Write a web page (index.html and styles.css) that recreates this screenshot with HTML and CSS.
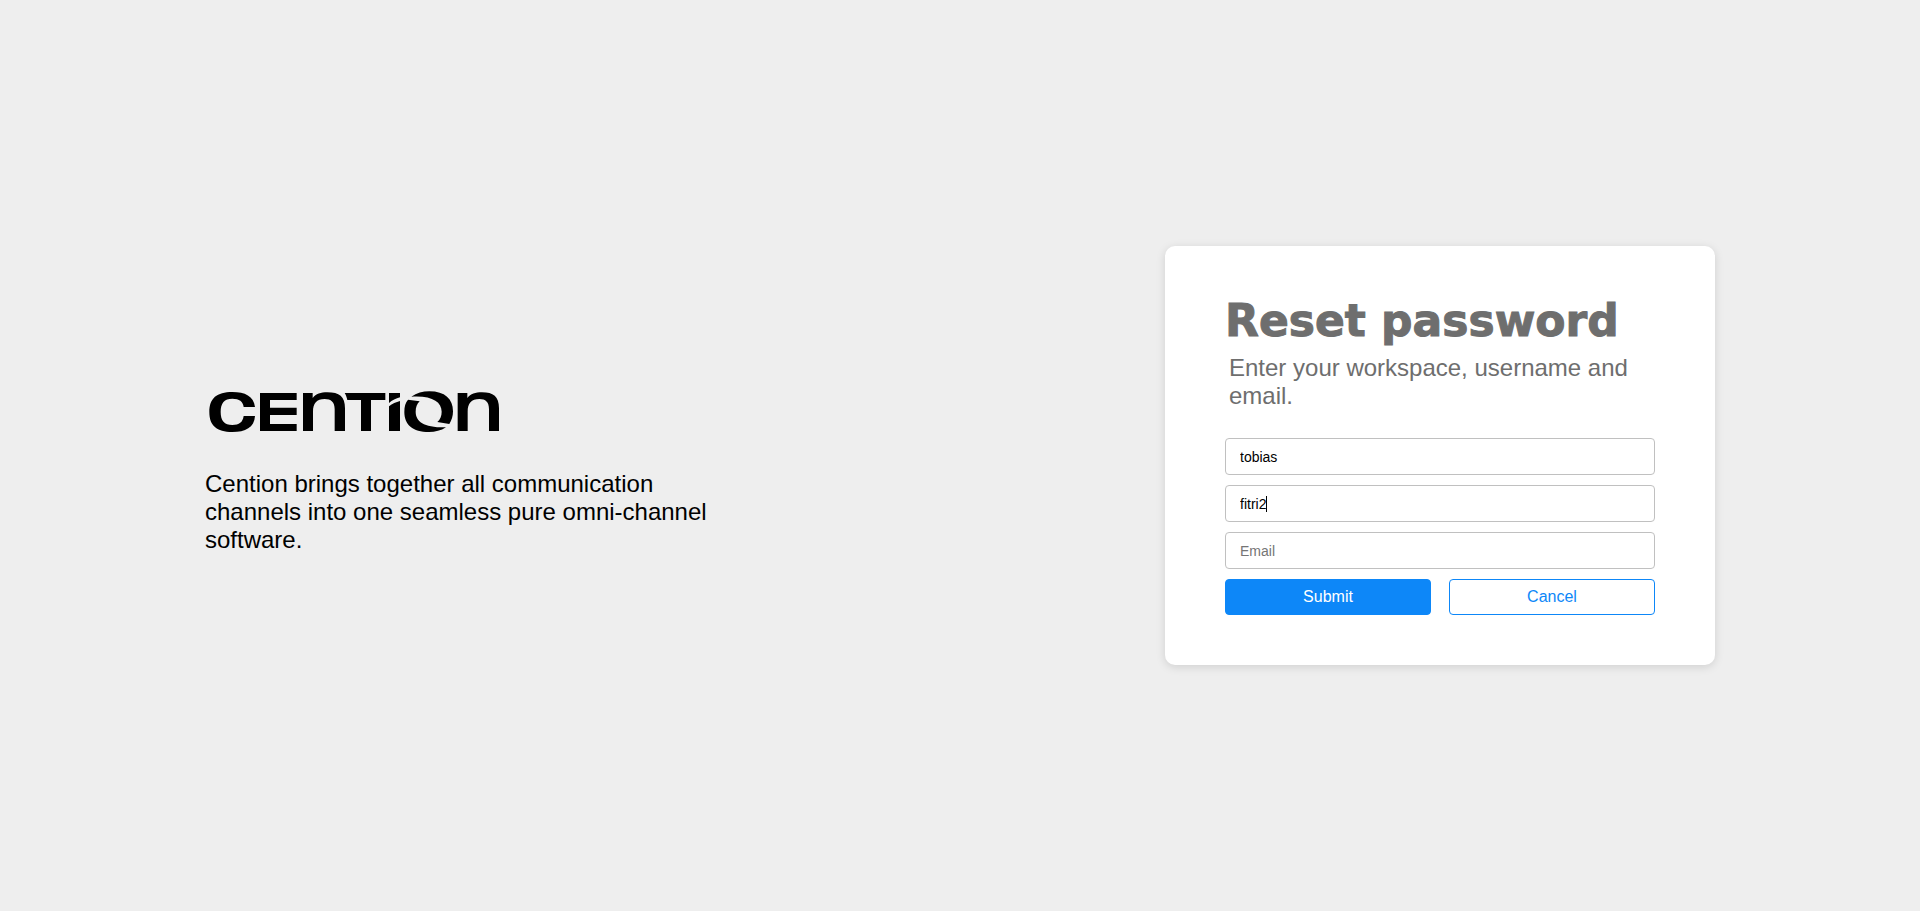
FILE: index.html
```html
<!DOCTYPE html>
<html lang="en">
<head>
<meta charset="utf-8">
<meta name="viewport" content="width=device-width, initial-scale=1">
<title>Cention - Reset password</title>
<link rel="stylesheet" href="styles.css">
</head>
<body>
<main class="page">
  <section class="intro">
    <svg class="logo" viewBox="15 30 900 129" role="img" aria-label="Cention">
      <path d="M165 81C161 48 135 36 97 36C50 36 28 55 28 96C28 137 50 156 97 156C136 156 163 143 165 108H131C128 127 118 135 97 135C73 135 62 122 62 96C62 69 73 56 97 56C118 56 129 64 131 81Z"/>
      <path d="M180 39H290V60H210V83H290V105H210V132H290V153H180Z"/>
      <path d="M309 39H338V54C348 42 362 37 382 37C418 37 435 50 435 85V153H404V88C404 66 393 57 374 57C350 57 339 70 339 95V153H309Z"/>
      <path d="M434 39H556V60H513V153H483V60H442C440 52 438 45 434 39Z"/>
      <path d="M567 39H600V52C588 55 576 61 567 69Z"/>
      <path d="M567 79C577 71 588 66 600 63V153H567Z"/>
      <path d="M634 50C650 39 668 34 688 34C735 34 759 57 759 94C759 108 755 121 748 132L712 126C721 118 725 107 725 95C725 65 695 46 634 50Z"/>
      <path d="M624 59L659 64C651 71 647 82 647 95C647 125 672 143 738 142C723 152 706 156 687 156C638 156 613 134 613 96C613 80 616 68 624 59Z"/>
      <path d="M773 39H802V54C812 42 826 37 846 37C880 37 897 50 897 85V153H867V88C867 66 857 57 838 57C814 57 803 70 803 95V153H773Z"/>
    </svg>
    <p class="tagline">Cention brings together all communication channels into one seamless pure omni-channel software.</p>
  </section>
  <section class="panel">
    <form class="card">
      <h1 class="title">Reset password</h1>
      <p class="hint">Enter your workspace, username and email.</p>
      <div class="fields">
        <input class="field" type="text" aria-label="Workspace" placeholder="Workspace" value="tobias">
        <div class="active">
          <input class="field" type="text" aria-label="Username" placeholder="Username" value="fitri2">
          <span class="caret"></span>
        </div>
        <input class="field" type="email" aria-label="Email" placeholder="Email">
        <div class="actions">
          <button class="button primary" type="submit">Submit</button>
          <button class="button" type="button">Cancel</button>
        </div>
      </div>
    </form>
  </section>
</main>
</body>
</html>
```
FILE: styles.css
```css
* {
  box-sizing: border-box;
}

body {
  margin: 0;
  background: #eee;
  color: #000;
  font-family: Arial, "Liberation Sans", sans-serif;
}

.page {
  display: grid;
  grid-template-columns: 1fr 1fr;
  align-items: center;
  justify-items: center;
  min-height: 100vh;
}

.intro,
.panel {
  width: 100%;
  max-width: 550px;
}

.intro {
  padding-top: 33px;
}

.logo {
  display: block;
  width: 300px;
}

.tagline {
  margin: 37px 0 0;
  font-size: 24px;
  line-height: 28px;
}

.card {
  padding: 50px 60px;
  border-radius: 10px;
  background: #fff;
  box-shadow: 0 2px 10px rgba(0, 0, 0, 0.13);
}

.title {
  margin: 0 0 8px;
  color: #6e6e6e;
  font-family: "Arial Black", "DejaVu Sans", sans-serif;
  font-size: 44px;
  font-weight: 900;
  line-height: 50px;
  white-space: nowrap;
  -webkit-text-stroke: 1px #6e6e6e;
}

.hint {
  margin: 0 4px 28px;
  color: #6e6e6e;
  font-size: 24px;
  line-height: 28px;
}

.fields {
  display: grid;
  gap: 10px;
}

.field {
  display: block;
  width: 100%;
  height: 37px;
  padding: 0 14px;
  border: 1px solid #c0c0c0;
  border-radius: 4px;
  background: #fff;
  color: #000;
  font: 14px Arial, "Liberation Sans", sans-serif;
}

.field::placeholder {
  color: #757575;
}

.active {
  position: relative;
}

.caret {
  position: absolute;
  top: 11px;
  left: 41px;
  width: 1px;
  height: 16px;
  background: #000;
}

.actions {
  display: grid;
  grid-template-columns: 1fr 1fr;
  gap: 18px;
}

.button {
  height: 36px;
  padding: 0;
  border: 1px solid #0d87f8;
  border-radius: 4px;
  background: #fff;
  color: #0d87f8;
  font: 16px Arial, "Liberation Sans", sans-serif;
}

.primary {
  background: #0d87f8;
  color: #fff;
}
```
